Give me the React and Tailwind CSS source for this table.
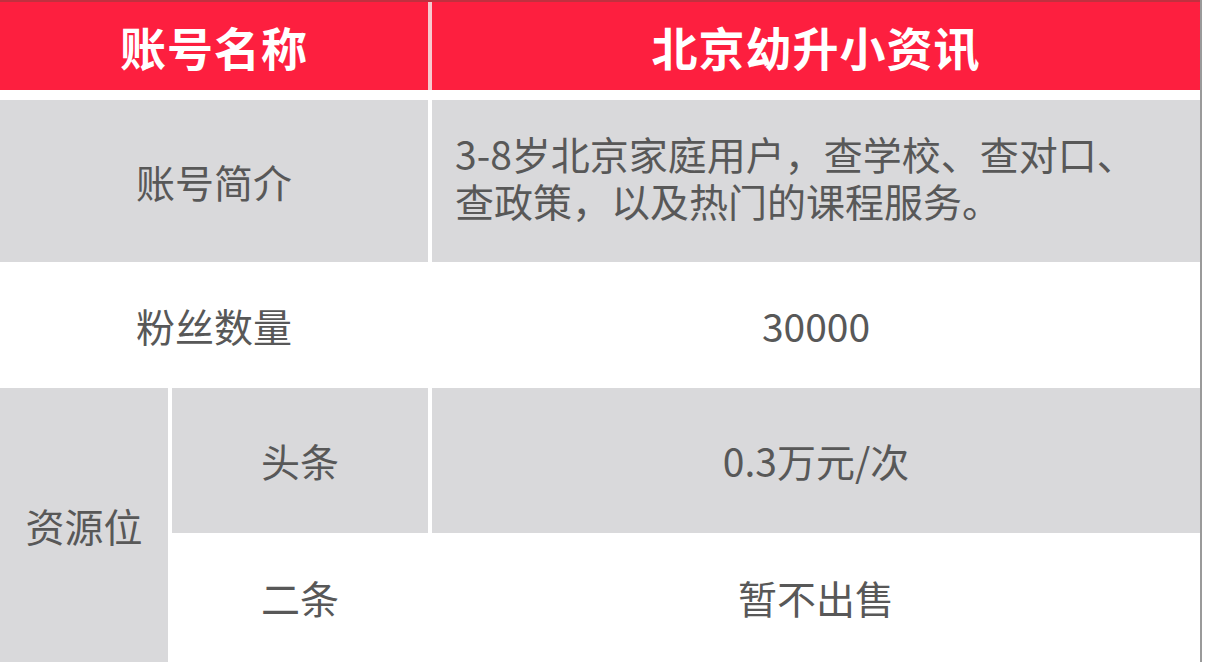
export default function App() {
  const font = { fontFamily: '"Noto Sans CJK SC", "Noto Sans", sans-serif' };
  return (
    <div className="w-[1207px] h-[662px] overflow-hidden bg-white" style={font}>
      <div className="w-[1202px] h-[662px] border-r-2 border-[#9a9a9a] flex flex-col">
        {/* header */}
        <div className="h-[90px] flex bg-[#fd1f3f] border-t-2 border-[#c0303f]">
          <div className="w-[428px] flex items-center justify-center text-white font-bold text-[46px] tracking-[1px]">账号名称</div>
          <div className="w-[4px] bg-[#f7c9cf]"></div>
          <div className="flex-1 flex items-center justify-center text-white font-bold text-[46px] tracking-[1px]">北京幼升小资讯</div>
        </div>
        <div className="h-[10px] bg-white"></div>
        {/* intro */}
        <div className="h-[162px] flex bg-[#d9d9db] text-[#585858] text-[39px]">
          <div className="w-[428px] flex items-center justify-center">账号简介</div>
          <div className="w-[4px] bg-white"></div>
          <div className="flex-1 flex flex-col justify-center pl-[23px] pb-[8px]">
            <div className="leading-[47px] h-[47px]">3-8岁北京家庭用户，查学校、查对口、</div>
            <div className="leading-[47px] h-[47px]">查政策，以及热门的课程服务。</div>
          </div>
        </div>
        {/* fans */}
        <div className="h-[126px] flex bg-white text-[#585858] text-[39px]">
          <div className="w-[428px] flex items-center justify-center">粉丝数量</div>
          <div className="w-[4px] bg-white"></div>
          <div className="flex-1 flex items-center justify-center">30000</div>
        </div>
        {/* resources */}
        <div className="flex-1 flex text-[#585858] text-[39px]">
          <div className="w-[168px] bg-[#d9d9db] flex items-center justify-center">资源位</div>
          <div className="w-[4px] bg-white"></div>
          <div className="flex-1 flex flex-col">
            <div className="h-[145px] flex bg-[#d9d9db]">
              <div className="w-[256px] flex items-center justify-center">头条</div>
              <div className="w-[4px] bg-white"></div>
              <div className="flex-1 flex items-center justify-center">0.3万元/次</div>
            </div>
            <div className="flex-1 flex bg-white">
              <div className="w-[256px] flex items-center justify-center">二条</div>
              <div className="w-[4px] bg-white"></div>
              <div className="flex-1 flex items-center justify-center">暂不出售</div>
            </div>
          </div>
        </div>
      </div>
    </div>
  );
}
